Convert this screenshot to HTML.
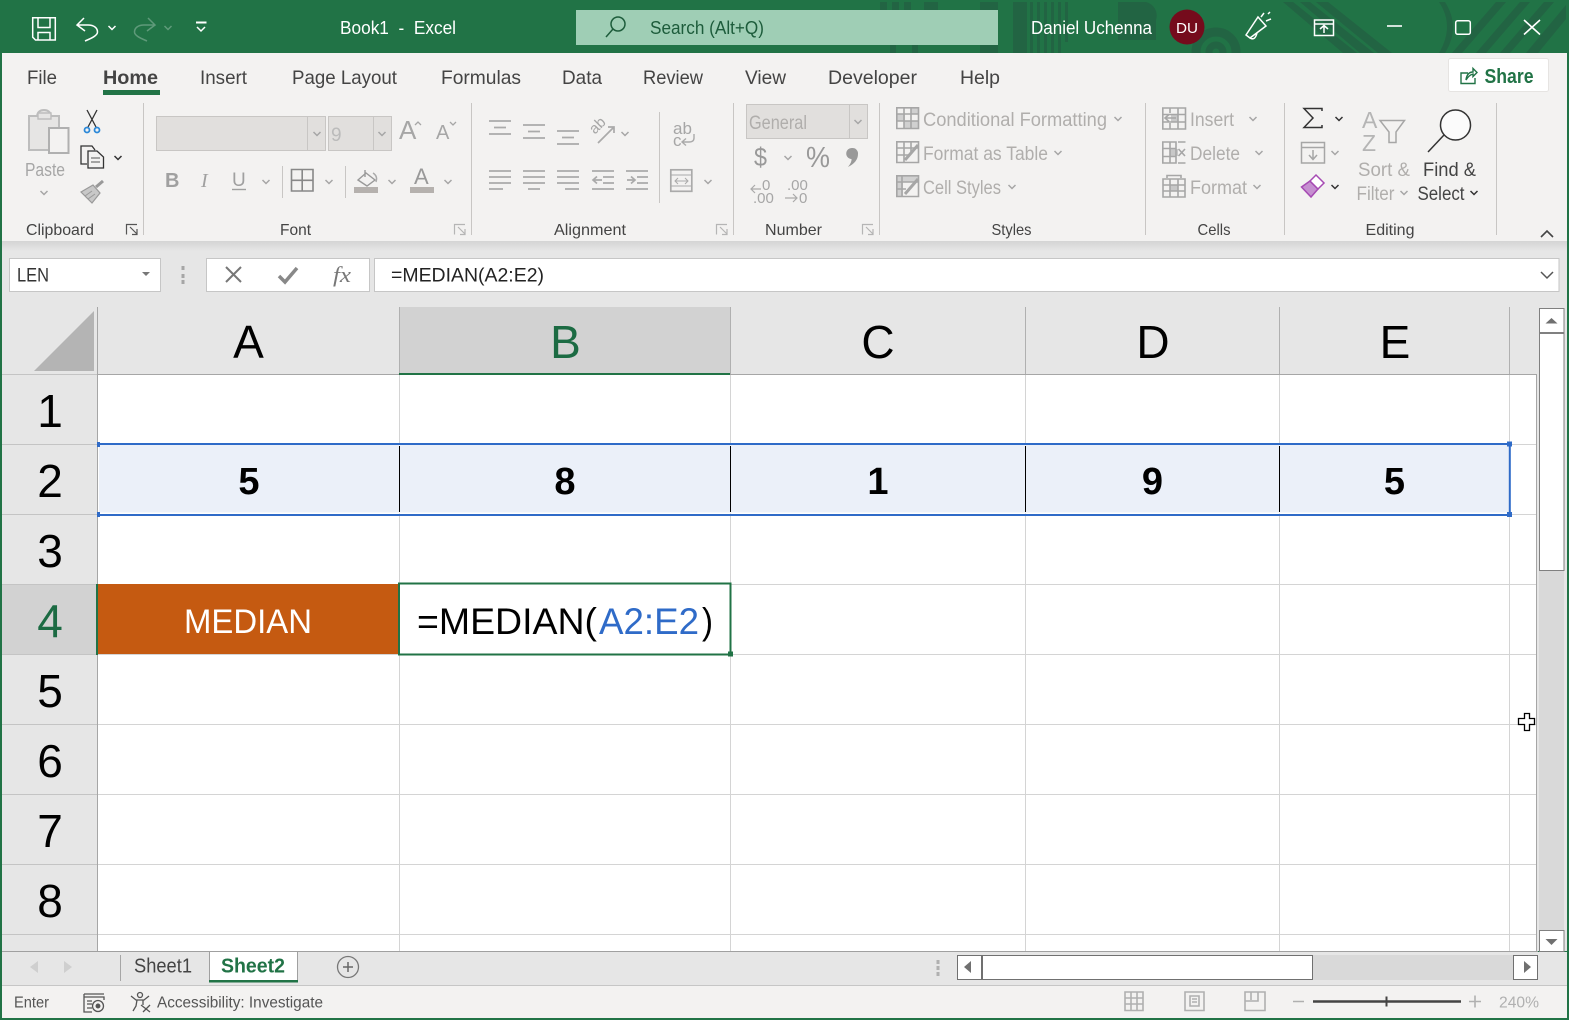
<!DOCTYPE html>
<html><head><meta charset="utf-8"><title>Book1 - Excel</title>
<style>
html,body{margin:0;padding:0;background:#fff;width:1569px;height:1020px;overflow:hidden}
svg{display:block;position:absolute;left:0;top:0}
text{font-family:"Liberation Sans",sans-serif}
.t{font-size:19.5px;fill:#444}
.g{font-size:16px;fill:#444}
.d{font-size:19px;fill:#b0aeac}
.k{font-size:19px;fill:#444}
.h{font-size:46px;fill:#000;text-anchor:middle}
.v{font-size:38px;font-weight:bold;fill:#000;text-anchor:middle}
.i{fill:none;stroke:#a6a6a6;stroke-width:1.6}
.l{fill:none;stroke:#aaa;stroke-width:1.7}
</style></head><body>
<svg width="1569" height="1020" viewBox="0 0 1569 1020" xmlns="http://www.w3.org/2000/svg">
<defs>
<linearGradient id="sh" x1="0" y1="0" x2="0" y2="1"><stop offset="0" stop-color="#d4d4d4"/><stop offset="1" stop-color="#e6e6e6"/></linearGradient>
<path id="c" d="M-3.5-2L0 1.5L3.5-2" fill="none" stroke-width="1.5"/>
<g id="a3"><path d="M0 0H22M5 6.5H17M0 13H22"/></g>
<g id="a4l"><path d="M0 0H22M0 6H22M0 12H22M0 18H14"/></g>
<g id="a4c"><path d="M0 0H22M0 6H22M0 12H22M5 18H17"/></g>
<g id="a4r"><path d="M0 0H22M0 6H22M0 12H22M8 18H22"/></g>
</defs>
<!-- title bar -->
<rect width="1569" height="1020" fill="#217346"/>
<g fill="#226443">
<rect x="880" y="2" width="7" height="8"/><rect x="892" y="2" width="7" height="8"/><rect x="904" y="2" width="7" height="8"/><rect x="924" y="2" width="14" height="8"/><rect x="980" y="2" width="18" height="8"/><rect x="980" y="45" width="18" height="8"/><rect x="890" y="45" width="6" height="8"/><rect x="912" y="45" width="6" height="8"/>
<rect x="1013" y="2" width="14" height="51"/><rect x="1030" y="2" width="3" height="51"/><rect x="1037" y="2" width="3" height="51"/><rect x="1044" y="2" width="3" height="51"/><rect x="1051" y="2" width="3" height="51"/><rect x="1058" y="2" width="3" height="51"/><rect x="1065" y="2" width="3" height="40"/>
<path d="M1118 2h28a14 14 0 0 1 10 18v20h-38z"/>
<path d="M1283 2h10l64 51h-14zM1300 2h10l64 51h-14zM1316 2h12l64 51h-14z" />
<path d="M1445 2h-6q16 24 0 51h6q16-26 0-51z"/>
<path d="M1452 53l44-51h10l-44 51zM1476 53l44-51h10l-44 51zM1500 53l44-51h10l-44 51zM1526 53l40-48v14l-28 34z"/>
</g>
<g fill="none" stroke="#226443"><circle cx="1216" cy="52" r="20" stroke-width="9"/><circle cx="1216" cy="52" r="7" stroke-width="7"/></g>
<rect x="576" y="10" width="422" height="35" fill="#9fceb5"/>
<g fill="none" stroke="#1d5c3b" stroke-width="1.5"><circle cx="618" cy="24" r="7"/><path d="M613 29L606 37"/></g>
<text x="650" y="34" font-size="18" fill="#1d5c3b" textLength="114" lengthAdjust="spacingAndGlyphs">Search (Alt+Q)</text>
<text x="340" y="34" font-size="18" fill="#fff" textLength="116" lengthAdjust="spacingAndGlyphs" xml:space="preserve">Book1  -  Excel</text>
<text x="1031" y="34" font-size="18" fill="#fff" textLength="121" lengthAdjust="spacingAndGlyphs">Daniel Uchenna</text>
<circle cx="1187" cy="27" r="17.5" fill="#750b1c"/>
<text x="1187" y="33" font-size="15" fill="#fff" text-anchor="middle" textLength="22" lengthAdjust="spacingAndGlyphs">DU</text>
<!-- QAT icons -->
<g fill="none" stroke="#fff" stroke-width="1.5">
<path d="M32.7 17.7H55.3V40H35.5L32.7 37.2Z"/><path d="M38 18V27.500H50V18M38 40V32.500H50V40"/>
<path d="M84 18L77 25L85 31M77 25H88C94 25 97.500 28 97.500 32C97.500 35.500 92 38 85 41"/>
<path d="M196 22.500H206.500" stroke-width="2"/><path d="M197 27L201 31L205 27"/>
<path d="M1246 35L1258 17L1266 26L1250 38ZM1250 38Q1255 41 1257 33M1261 17L1264 13M1266 21L1271 19M1268 14L1270 12" />
<path d="M1314.500 20H1333.500V35.500H1314.500ZM1314.500 24H1333.500M1324 33V26M1320 29L1324 25.500L1328 29"/>
<path d="M1387 26H1402" stroke-width="1.600"/>
<rect x="1455.700" y="20.700" width="14.600" height="13.600" rx="2"/>
<path d="M1524 20L1540 34.500M1540 20L1524 34.500" stroke-width="1.600"/>
</g>
<g fill="none" stroke="#5f9a7a" stroke-width="1.5"><path d="M148 18L155 25L147 31M155 25H144C138 25 134.500 28 134.500 32C134.500 35.500 140 38 147 41"/></g>
<use href="#c" x="112" y="28" stroke="#fff"/><use href="#c" x="168" y="28" stroke="#5f9a7a"/>
<!-- ribbon -->
<rect x="2" y="53" width="1565" height="188" fill="#f3f2f1"/>
<rect x="2" y="241" width="1565" height="710" fill="#e6e6e6"/>
<rect x="2" y="241" width="1565" height="10" fill="url(#sh)"/>
<text x="27" y="84" class="t" textLength="30" lengthAdjust="spacingAndGlyphs">File</text>
<text x="103" y="84" class="t" font-weight="bold" textLength="55" lengthAdjust="spacingAndGlyphs">Home</text>
<rect x="103" y="90" width="57" height="5" fill="#217346"/>
<text x="200" y="84" class="t" textLength="47" lengthAdjust="spacingAndGlyphs">Insert</text>
<text x="292" y="84" class="t" textLength="105" lengthAdjust="spacingAndGlyphs">Page Layout</text>
<text x="441" y="84" class="t" textLength="80" lengthAdjust="spacingAndGlyphs">Formulas</text>
<text x="562" y="84" class="t" textLength="40" lengthAdjust="spacingAndGlyphs">Data</text>
<text x="643" y="84" class="t" textLength="60" lengthAdjust="spacingAndGlyphs">Review</text>
<text x="745" y="84" class="t" textLength="41" lengthAdjust="spacingAndGlyphs">View</text>
<text x="828" y="84" class="t" textLength="89" lengthAdjust="spacingAndGlyphs">Developer</text>
<text x="960" y="84" class="t" textLength="40" lengthAdjust="spacingAndGlyphs">Help</text>
<rect x="1448.500" y="58.500" width="100" height="33" rx="2" fill="#fff" stroke="#e6e4e2"/>
<text x="1484.500" y="83" font-size="20" font-weight="bold" fill="#217346" textLength="49" lengthAdjust="spacingAndGlyphs">Share</text>
<g fill="none" stroke="#217346" stroke-width="1.400"><path d="M1468 73H1461V83.500H1475V78"/><path d="M1466 80Q1467 72 1473 72V68.500L1477 72.500L1473 76.500V74Q1469 75 1466 80Z"/></g>
<!-- separators -->
<path d="M143.500 103V235M471.500 103V235M733.500 103V235M879.500 103V235M1145.500 103V235M1284.500 103V235M1496.500 103V235M282.500 166V198M345.500 166V198M659.500 112V203" stroke="#c8c6c4" fill="none"/>
<g class="g">
<text x="26" y="235" class="g" textLength="68" lengthAdjust="spacingAndGlyphs">Clipboard</text>
<text x="280" y="235" class="g" textLength="31" lengthAdjust="spacingAndGlyphs">Font</text>
<text x="554" y="235" class="g" textLength="72" lengthAdjust="spacingAndGlyphs">Alignment</text>
<text x="765" y="235" class="g" textLength="57" lengthAdjust="spacingAndGlyphs">Number</text>
<text x="991.500" y="235" class="g" textLength="40" lengthAdjust="spacingAndGlyphs">Styles</text>
<text x="1197.500" y="235" class="g" textLength="33" lengthAdjust="spacingAndGlyphs">Cells</text>
<text x="1365.500" y="235" class="g" textLength="49" lengthAdjust="spacingAndGlyphs">Editing</text>
</g>
<!-- launchers -->
<g fill="none" stroke-width="1.200">
<path d="M126.500 234.500V224.500H137M130 227L137 234M137 229V234.500H132" stroke="#555"/>
<path d="M454.500 234.500V224.500H465M458 227L465 234M465 229V234.500H460" stroke="#b5b5b5"/>
<path d="M716.500 234.500V224.500H727M720 227L727 234M727 229V234.500H722" stroke="#b5b5b5"/>
<path d="M862.500 234.500V224.500H873M866 227L873 234M873 229V234.500H868" stroke="#b5b5b5"/>
</g>
<path d="M1541 237L1547 231L1553 237" fill="none" stroke="#444" stroke-width="1.600"/>
<!-- clipboard -->
<path d="M29 116H37Q38 110 44 110T51 116H59V150H29Z" fill="#e6e5e4" stroke="#bdbdbd" stroke-width="2"/>
<path d="M38 113H51V119H38Z" fill="#e6e5e4" stroke="#bdbdbd" stroke-width="1.400"/>
<rect x="49" y="128" width="19.500" height="25" fill="#f3f2f1" stroke="#b0b0b0" stroke-width="2"/>
<text x="25" y="176" font-size="18" fill="#a6a6a6" textLength="40" lengthAdjust="spacingAndGlyphs">Paste</text>
<use href="#c" x="44" y="193" stroke="#a6a6a6"/>
<path d="M87 110L96 127M97 110L88 127" stroke="#333" fill="none" stroke-width="1.300"/>
<g fill="none" stroke="#2b88d8" stroke-width="1.800"><circle cx="87" cy="130" r="2.500"/><circle cx="97" cy="130" r="2.500"/></g>
<path d="M87 164H81V146H92L95 150M88 151H97L103.500 157V168H88Z" fill="none" stroke="#333" stroke-width="1.300"/><path d="M91 158H100M91 162H100" stroke="#555"/>
<use href="#c" x="118" y="158" stroke="#333"/>
<path d="M81 192L93 185L100 193L92 203Z" fill="#c8c8c8" stroke="#999" stroke-width="1.200"/><path d="M85 196L92 191M88 199L95 194" stroke="#999"/><path d="M96 187L103 181" stroke="#999" stroke-width="3"/>
<!-- font -->
<rect x="156.500" y="116.500" width="169" height="34" fill="#e1dfdd" stroke="#c8c6c4"/><path d="M307.500 117V150" stroke="#c8c6c4"/>
<rect x="328.500" y="116.500" width="63" height="34" fill="#e1dfdd" stroke="#c8c6c4"/><path d="M373.500 117V150" stroke="#c8c6c4"/>
<text x="331" y="141" font-size="19" fill="#bbb">9</text>
<use href="#c" x="317" y="134" stroke="#a6a6a6"/><use href="#c" x="382" y="134" stroke="#a6a6a6"/>
<text x="399" y="139" font-size="26" fill="#a6a6a6">A</text><text x="436" y="139" font-size="20" fill="#a6a6a6">A</text>
<path d="M415 125L418 122L421 125" fill="none" stroke="#a6a6a6" stroke-width="1.300"/><path d="M450 122L453 125L456 122" fill="none" stroke="#a6a6a6" stroke-width="1.300"/>
<text x="165" y="187" font-size="20" font-weight="bold" fill="#a0a0a0">B</text>
<text x="201" y="187" font-size="20" font-style="italic" fill="#a0a0a0" style="font-family:'Liberation Serif',serif">I</text>
<text x="232" y="186" font-size="19" fill="#a0a0a0">U</text><path d="M232 189.500H246" stroke="#a0a0a0" stroke-width="1.400"/>
<use href="#c" x="266" y="182" stroke="#a6a6a6"/><use href="#c" x="329" y="182" stroke="#a6a6a6"/><use href="#c" x="392" y="182" stroke="#a6a6a6"/><use href="#c" x="448" y="182" stroke="#a6a6a6"/>
<path d="M291.500 169.500H313V191H291.500ZM302.200 170V191M292 180.300H313" fill="none" stroke="#888" stroke-width="1.600"/>
<path d="M358 180L366 173L375 180L367 186ZM365 170V177" fill="none" stroke="#999" stroke-width="1.400"/>
<path d="M373 173Q378 176 376 182" fill="none" stroke="#aaa" stroke-width="1.400"/>
<rect x="354" y="187" width="24" height="6" fill="#b5b1ae"/>
<text x="414" y="184" font-size="22" fill="#999">A</text>
<rect x="410" y="187" width="24" height="6" fill="#b5b1ae"/>
<!-- alignment -->
<g class="l">
<use href="#a3" x="489" y="121"/><use href="#a3" x="523" y="125"/><use href="#a3" x="557" y="131"/>
<use href="#a4l" x="489" y="171"/><use href="#a4c" x="523" y="171"/><use href="#a4r" x="557" y="171"/>
<path d="M592 171H614M603 177H614M603 183H614M592 189H614M602 180H593M597 176.500L593 180L597 183.500"/>
<path d="M626 171H648M637 177H648M637 183H648M626 189H648M627 180H635M631 176.500L635 180L631 183.500"/>
<path d="M598 143L614 127M608 127H614V133"/>
</g>
<text x="590" y="131" font-size="15" fill="#a6a6a6" transform="rotate(-45 597 127)">ab</text>
<use href="#c" x="625" y="134" stroke="#a6a6a6"/>
<text x="673" y="134" font-size="17" fill="#a6a6a6">ab</text><text x="673" y="146" font-size="17" fill="#a6a6a6">c</text>
<path d="M694 134V138Q694 142 689 142H683M686 138.500L682 142L686 145.500" fill="none" stroke="#aaa" stroke-width="1.400"/>
<rect x="670.800" y="169.800" width="21" height="21.500" fill="none" stroke="#aaa" stroke-width="1.700"/><path d="M671 175H691M671 186H691M675 181H688M678 178L675 181L678 184M685 178L688 181L685 184" stroke="#aaa" fill="none"/>
<use href="#c" x="708" y="182" stroke="#a6a6a6"/>
<!-- number -->
<rect x="746.500" y="104.500" width="121" height="34" fill="#e1dfdd" stroke="#c8c6c4"/><path d="M849.500 105V138" stroke="#c8c6c4"/>
<text x="749" y="129" font-size="19" fill="#b0aeac" textLength="58" lengthAdjust="spacingAndGlyphs">General</text>
<use href="#c" x="858" y="122" stroke="#a6a6a6"/>
<text x="754" y="166" font-size="26" fill="#999" textLength="13" lengthAdjust="spacingAndGlyphs">$</text>
<use href="#c" x="788" y="158" stroke="#a6a6a6"/>
<text x="806" y="167" font-size="29" fill="#999" textLength="24" lengthAdjust="spacingAndGlyphs">%</text>
<path d="M852 148A5.500 5.500 0 0 1 858 154Q858 162 848 167Q852 162 851.500 159A5.500 5.500 0 0 1 852 148Z" fill="#999"/>
<text x="762" y="190" font-size="15" fill="#a6a6a6">0</text><text x="753" y="203" font-size="15" fill="#a6a6a6">.00</text>
<text x="787" y="190" font-size="15" fill="#a6a6a6">.00</text><text x="799" y="203" font-size="15" fill="#a6a6a6">0</text>
<path d="M761 189H751M755 185L751 189L755 193M785 198H797M793 194L797 198L793 202" fill="none" stroke="#aaa" stroke-width="1.200"/>
<!-- styles -->
<rect x="897" y="114" width="8" height="7" fill="#d0d0d0"/><rect x="904" y="121" width="14" height="7" fill="#d0d0d0"/><rect x="911" y="108" width="7" height="6" fill="#d0d0d0"/>
<rect x="897" y="176" width="21" height="6" fill="#d0d0d0"/><rect x="897" y="182" width="6" height="14" fill="#d0d0d0"/>
<rect x="1171" y="115" width="7" height="7" fill="#c8c8c8"/>
<rect x="1170" y="149" width="8" height="7" fill="#c8c8c8"/>
<rect x="1170" y="185" width="8" height="6" fill="#c8c8c8"/>
<g class="i">
<path d="M896.800 107.800H918.500V128.500H896.800ZM897 114H918M897 121H918M904 108V128M911 108V128"/>
<path d="M896.800 141.800H918.500V162.500H896.800ZM897 148H918M897 155H910M904 142V162M911 142V154"/>
<path d="M896.800 175.800H918.500V196.500H896.800ZM897 182H918M902 176V196M897 189H906"/>
<path d="M905 160L918 145M905 194L918 179" stroke-width="3"/>
<path d="M1162.800 108H1185.500V129H1162.800ZM1163 114.500H1185M1163 122H1185M1178 108V129M1170 108V113M1170 123V129M1176 118H1165M1169 114.500L1165 118L1169 121.500"/>
<path d="M1162.800 142H1176V163H1162.800ZM1163 148.500H1176M1163 156.500H1176M1170 142V163M1178 142H1185.500M1178 163H1185.500M1178.500 149L1185 156M1185 149L1178.500 156"/>
<path d="M1163 179H1185V197H1163ZM1163 185H1185M1163 191H1185M1170 179V197M1178 179V197M1167 178V175.500H1181V178"/>
</g>
<text x="923" y="126" class="d" textLength="184" lengthAdjust="spacingAndGlyphs">Conditional Formatting</text>
<text x="923" y="160" class="d" textLength="125" lengthAdjust="spacingAndGlyphs">Format as Table</text>
<text x="923" y="194" class="d" textLength="78" lengthAdjust="spacingAndGlyphs">Cell Styles</text>
<text x="1190" y="126" class="d" textLength="44" lengthAdjust="spacingAndGlyphs">Insert</text>
<text x="1190" y="160" class="d" textLength="50" lengthAdjust="spacingAndGlyphs">Delete</text>
<text x="1190" y="194" class="d" textLength="57" lengthAdjust="spacingAndGlyphs">Format</text>
<g stroke="#a6a6a6">
<use href="#c" x="1118" y="119"/><use href="#c" x="1058" y="153"/><use href="#c" x="1012" y="187"/>
<use href="#c" x="1253" y="119"/><use href="#c" x="1259" y="153"/><use href="#c" x="1257" y="187"/><use href="#c" x="1335" y="153"/><use href="#c" x="1404" y="193"/>
</g>
<!-- editing -->
<path d="M1322 111V108.500H1304L1313 118L1304 127.500H1322V125" fill="none" stroke="#333" stroke-width="1.500"/>
<path d="M1301.500 142.500H1324.500V163H1301.500ZM1302 147.500H1324M1313 150V159M1309 155L1313 159.500L1317 155" fill="none" stroke="#a6a6a6" stroke-width="1.500"/>
<path d="M1301.500 187L1311 197L1318 189L1310 181Z" fill="#c58fd0" stroke="#a64ab3" stroke-width="1.500"/><path d="M1310 181L1316 175L1324 183L1318 189Z" fill="#fff" stroke="#a64ab3" stroke-width="1.500"/>
<g stroke="#333"><use href="#c" x="1339" y="119"/><use href="#c" x="1335" y="187"/><use href="#c" x="1474" y="193"/></g>
<text x="1362" y="128" font-size="23" fill="#b5b5b5">A</text><text x="1362" y="151" font-size="23" fill="#b5b5b5">Z</text>
<path d="M1380 120.500H1404.500L1396 132V142.500H1389V132Z" fill="none" stroke="#a6a6a6" stroke-width="1.500"/>
<circle cx="1455.500" cy="125" r="15" fill="#fbfbfb" stroke="#333" stroke-width="1.500"/><path d="M1444 135L1428 152" stroke="#333" stroke-width="1.500"/>
<text x="1358" y="176" class="d" textLength="52" lengthAdjust="spacingAndGlyphs">Sort &amp;</text>
<text x="1356.500" y="200" class="d" textLength="38" lengthAdjust="spacingAndGlyphs">Filter</text>
<text x="1423" y="176" class="k" textLength="53" lengthAdjust="spacingAndGlyphs">Find &amp;</text>
<text x="1417.500" y="200" class="k" textLength="47" lengthAdjust="spacingAndGlyphs">Select</text>
<!-- formula bar -->
<rect x="9.500" y="258.500" width="151" height="33" fill="#fff" stroke="#c6c6c6"/>
<text x="17" y="281.500" font-size="19" fill="#333" textLength="32" lengthAdjust="spacingAndGlyphs">LEN</text>
<path d="M142 272H150L146 276Z" fill="#777"/>
<path d="M183 266V270M183 274V278M183 280V284" stroke="#a6a6a6" stroke-width="3"/>
<rect x="206.500" y="258.500" width="163" height="33" fill="#fff" stroke="#c6c6c6"/>
<path d="M226 267L241 282M241 267L226 282" stroke="#777" stroke-width="2" fill="none"/>
<path d="M279 276L285 282L297 268" stroke="#888" stroke-width="3.500" fill="none"/>
<text x="333" y="282" font-size="22" font-style="italic" fill="#777" style="font-family:'Liberation Serif',serif" textLength="18" lengthAdjust="spacingAndGlyphs">fx</text>
<rect x="374.500" y="258.500" width="1184.500" height="33" fill="#fff" stroke="#c6c6c6"/>
<text x="391" y="281.500" font-size="19" fill="#222" textLength="153" lengthAdjust="spacingAndGlyphs">=MEDIAN(A2:E2)</text>
<path d="M1541 272L1547 278L1553 272" fill="none" stroke="#555" stroke-width="1.500"/>
<!-- sheet -->
<rect x="98" y="375" width="1438" height="576" fill="#fff"/>
<rect x="399" y="307" width="331" height="67" fill="#d2d2d2"/>
<rect x="2" y="584" width="95" height="70" fill="#d2d2d2"/>
<g stroke="#d4d4d4" fill="none">
<path d="M98 444.500H1536M98 514.500H1536M98 584.500H1536M98 654.500H1536M98 724.500H1536M98 794.500H1536M98 864.500H1536M98 934.500H1536"/>
<path d="M399.500 375V951M730.500 375V951M1025.500 375V951M1279.500 375V951M1509.500 375V951"/>
</g>
<g stroke="#c4c4c4" fill="none"><path d="M2 374.500H97M2 444.500H97M2 514.500H97M2 584.500H97M2 654.500H97M2 724.500H97M2 794.500H97M2 864.500H97M2 934.500H97"/></g>
<g stroke="#b0b0b0" fill="none"><path d="M399.500 307V374M730.500 307V374M1025.500 307V374M1279.500 307V374M1509.500 307V374"/></g>
<path d="M97.500 307V951" stroke="#a6a6a6"/>
<path d="M98 374.500H1536.500V951" stroke="#a6a6a6" fill="none"/>
<path d="M399 374H730" stroke="#217346" stroke-width="2"/>
<path d="M34 371H94V311Z" fill="#b4b4b4"/>
<text x="248.500" y="358" class="h">A</text>
<text x="565.500" y="358" class="h" style="fill:#1c6b43">B</text>
<text x="878" y="358" class="h">C</text>
<text x="1153" y="358" class="h">D</text>
<text x="1395" y="358" class="h">E</text>
<text x="50" y="427" class="h">1</text><text x="50" y="497" class="h">2</text><text x="50" y="567" class="h">3</text>
<text x="50" y="637" class="h" style="fill:#1c6b43">4</text>
<text x="50" y="707" class="h">5</text><text x="50" y="777" class="h">6</text><text x="50" y="847" class="h">7</text><text x="50" y="917" class="h">8</text>
<!-- row 2 -->
<rect x="99" y="445" width="1410" height="68" fill="#ebf0f9"/>
<path d="M399.500 446V512M730.500 446V512M1025.500 446V512M1279.500 446V512" stroke="#000"/>
<path d="M99 513H1508" stroke="#fff"/>
<path d="M98 444H1509.800V515H98" fill="none" stroke="#2f6bc8" stroke-width="2"/>
<rect x="1507" y="441.500" width="5" height="5" fill="#2f6bc8"/><rect x="1507" y="512" width="5" height="5" fill="#2f6bc8"/>
<rect x="97" y="442" width="3" height="5" fill="#2f6bc8"/><rect x="97" y="512" width="3" height="5" fill="#2f6bc8"/>
<text x="249" y="494" class="v">5</text><text x="565" y="494" class="v">8</text><text x="878" y="494" class="v">1</text><text x="1152.500" y="494" class="v">9</text><text x="1394.500" y="494" class="v">5</text>
<!-- row 4 -->
<rect x="97" y="584" width="302" height="70" fill="#c55a11"/>
<path d="M97 584V655" stroke="#217346" stroke-width="2"/>
<text x="184" y="633" font-size="34" fill="#fff" textLength="128" lengthAdjust="spacingAndGlyphs">MEDIAN</text>
<rect x="399" y="583.500" width="331.500" height="71" fill="#fff" stroke="#217346" stroke-width="2"/>
<rect x="728" y="651.500" width="5" height="5" fill="#217346"/>
<text x="417" y="634" font-size="37" fill="#000" textLength="180" lengthAdjust="spacingAndGlyphs">=MEDIAN(</text>
<text x="599" y="634" font-size="37" fill="#2f6bc8" textLength="100" lengthAdjust="spacingAndGlyphs">A2:E2</text>
<text x="702" y="634" font-size="37" fill="#000" textLength="11" lengthAdjust="spacingAndGlyphs">)</text>
<!-- vertical scrollbar -->
<rect x="1537" y="307" width="30" height="644" fill="#e6e6e6"/>
<rect x="1539" y="333" width="25" height="618" fill="#d9d9d9"/>
<rect x="1539.500" y="308.500" width="24.500" height="25" fill="#fff" stroke="#808080"/>
<path d="M1551.500 318L1557.500 323.500H1545.500Z" fill="#707070"/>
<rect x="1539.500" y="333.500" width="24.500" height="237" fill="#fff" stroke="#808080"/>
<path d="M1539.500 333H1564" stroke="#808080" stroke-width="2"/>
<rect x="1539.500" y="930.500" width="24.500" height="21" fill="#fff" stroke="#808080"/>
<path d="M1551.500 945L1557.500 939H1545.500Z" fill="#707070"/>
<!-- cursor -->
<path d="M1524.500 713.500H1529.500V718.500H1534.500V724.500H1529.500V730.500H1524.500V724.500H1518.500V718.500H1524.500Z" fill="#fff" stroke="#000" stroke-width="1.300"/>
<!-- tabs -->
<rect x="2" y="952" width="1565" height="33" fill="#e6e6e6"/>
<path d="M2 951.500H210M297 951.500H1538" stroke="#a0a0a0"/>
<path d="M30 967L38 961V973Z M72 967L64 961V973Z" fill="#cfcfcf"/>
<path d="M120.500 955V981" stroke="#a6a6a6"/>
<path d="M209.500 951.500H297.500V981H209.500Z" fill="#fff" stroke="#a0a0a0"/>
<rect x="209" y="980" width="89" height="2.500" fill="#217346"/>
<text x="134" y="972.500" font-size="20" fill="#444" textLength="58" lengthAdjust="spacingAndGlyphs">Sheet1</text>
<text x="221" y="972.500" font-size="20" font-weight="bold" fill="#217346" textLength="64" lengthAdjust="spacingAndGlyphs">Sheet2</text>
<circle cx="348" cy="967" r="10.500" fill="none" stroke="#777" stroke-width="1.300"/><path d="M343 967H353M348 962V972" stroke="#666" stroke-width="1.500"/>
<path d="M938 960V964M938 966V970M938 972V976" stroke="#b0b0b0" stroke-width="3"/>
<rect x="981" y="955" width="556" height="25" fill="#d9d9d9"/>
<rect x="957.500" y="955.500" width="24" height="24" fill="#fff" stroke="#707070"/>
<path d="M964 967L971 961V973Z" fill="#707070"/>
<rect x="981.500" y="955.500" width="331" height="24" fill="#fff" stroke="#707070"/>
<path d="M982 955V980" stroke="#707070" stroke-width="2"/>
<rect x="1513.500" y="955.500" width="24" height="24" fill="#fff" stroke="#707070"/>
<path d="M1531 967L1524 961V973Z" fill="#707070"/>
<!-- status -->
<rect x="2" y="985" width="1565" height="33" fill="#f3f2f1"/>
<path d="M2 985.500H1567" stroke="#c6c6c6"/>
<text x="14" y="1007.500" font-size="15.500" fill="#555" textLength="35" lengthAdjust="spacingAndGlyphs">Enter</text>
<g fill="none" stroke="#555" stroke-width="1.300"><path d="M84 994H104M84 997H104V1000M84 994V1012H92M87 1001H92M87 1004H92M87 1008H92"/><circle cx="98" cy="1006" r="5.500"/><circle cx="98" cy="1006" r="1.800" fill="#555"/></g>
<g fill="none" stroke="#555" stroke-width="1.300"><circle cx="140" cy="995" r="2.500"/><path d="M131 996L136 1000H144L149 996M137 1000L136 1006L133 1011M143 1000V1005M141 1005L150 1012M150 1005L143 1012"/></g>
<text x="157" y="1007.500" font-size="15.500" fill="#555" textLength="166" lengthAdjust="spacingAndGlyphs">Accessibility: Investigate</text>
<g fill="none" stroke="#b0b0b0" stroke-width="1.600">
<path d="M1125 992H1143V1010.500H1125ZM1131 992V1010M1137 992V1010M1125 998H1143M1125 1004H1143"/>
<path d="M1185 992H1204V1010.500H1185ZM1190 996H1199V1006H1190ZM1192 999H1197M1192 1002H1197"/>
<path d="M1245 992H1265V1010.500H1245ZM1245 1001H1258V992M1251 992V1000"/>
<path d="M1293 1001.500H1304M1469 1001.500H1481M1475 995.500V1007.500"/>
</g>
<path d="M1313 1001.500H1461" stroke="#444" stroke-width="2.400"/><path d="M1386.500 996.500V1006.500" stroke="#444" stroke-width="2"/>
<text x="1499" y="1007.500" font-size="15.500" fill="#b0b0b0" textLength="40" lengthAdjust="spacingAndGlyphs">240%</text>
</svg>
</body></html>
